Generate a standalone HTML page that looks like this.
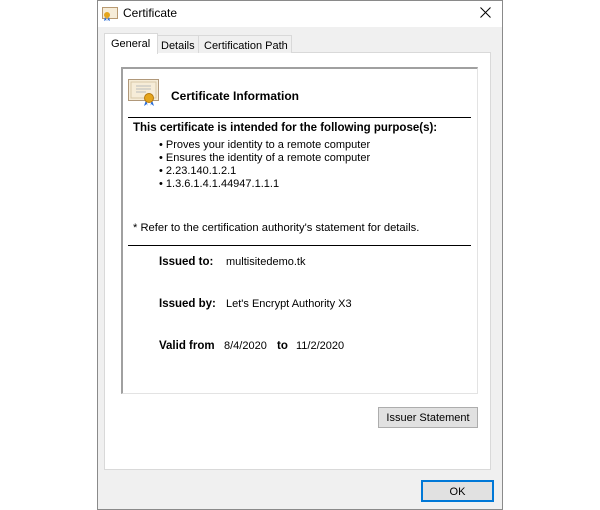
<!DOCTYPE html>
<html><head><style>
*{margin:0;padding:0;box-sizing:border-box}
body{width:600px;height:510px;background:#fff;font-family:"Liberation Sans",sans-serif;font-size:11px;color:#000;position:relative;overflow:hidden}
.a{position:absolute;white-space:nowrap}
.b{font-weight:bold;font-size:11.5px}
</style></head><body>
<div class="a" style="left:97px;top:0;width:406px;height:510px;border:1px solid #8a8a8a;background:#f0f0f0"></div>
<div class="a" style="left:98px;top:1px;width:404px;height:26px;background:#fff"></div>
<svg class="a" style="left:102px;top:7px" width="16" height="14"><rect x="0.5" y="0.5" width="15" height="11" fill="#f6ecd8" stroke="#b89a72"/><circle cx="5" cy="8" r="3" fill="#e5a51c"/><path d="M3 10l-1 4 2-1 1 1zM7 10l1 4-2-1-1 1z" fill="#2d6fd8"/></svg>
<div class="a" style="left:123px;top:6px;font-size:12px">Certificate</div>
<svg class="a" style="left:480px;top:7px" width="11" height="11"><path d="M0.5 0.5L10.5 10.5M10.5 0.5L0.5 10.5" stroke="#000" stroke-width="1"/></svg>
<div class="a" style="left:104px;top:52px;width:387px;height:418px;background:#fff;border:1px solid #d9d9d9"></div>
<div class="a" style="left:157px;top:35px;width:42px;height:18px;border:1px solid #d9d9d9;border-bottom:none;background:#f0f0f0;padding:4px 0 0 3px">Details</div>
<div class="a" style="left:198px;top:35px;width:94px;height:18px;border:1px solid #d9d9d9;border-bottom:none;background:#f0f0f0;padding:4px 0 0 5px">Certification Path</div>
<div class="a" style="left:104px;top:33px;width:54px;height:21px;border:1px solid #d9d9d9;border-bottom:none;background:#fff;padding:4px 0 0 6px">General</div>
<div class="a" style="left:121px;top:67px;width:357px;height:327px;border-top:2px solid #a0a0a0;border-left:2px solid #a0a0a0;border-right:1px solid #e3e3e3;border-bottom:1px solid #e3e3e3;background:#fff"></div>
<svg class="a" style="left:128px;top:79px" width="32" height="28"><rect x="0.5" y="0.5" width="30" height="21" fill="#f6ecd8" stroke="#b0987a"/><rect x="3" y="3" width="25" height="16" fill="none" stroke="#d8c7a8"/><path d="M8 7h15M8 10h15M8 13h10" stroke="#bbb"/><path d="M18 21l-2 6 3-2 1 2zM24 21l2 6-3-2-1 2z" fill="#2d6fd8"/><circle cx="21" cy="19" r="4.5" fill="#e5a51c" stroke="#b5780c"/></svg>
<div class="a b" style="left:171px;top:89px;font-size:12px">Certificate Information</div>
<div class="a" style="left:128px;top:117px;width:343px;height:1px;background:#000"></div>
<div class="a b" style="left:133px;top:122px">This certificate is intended for the following purpose(s):</div>
<div class="a" style="left:159px;top:139px;line-height:13px">• Proves your identity to a remote computer<br>• Ensures the identity of a remote computer<br>• 2.23.140.1.2.1<br>• 1.3.6.1.4.1.44947.1.1.1</div>
<div class="a" style="left:133px;top:222px;font-size:11.2px">* Refer to the certification authority's statement for details.</div>
<div class="a" style="left:128px;top:245px;width:343px;height:1px;background:#000"></div>
<div class="a b" style="left:159px;top:256px">Issued to:</div>
<div class="a" style="left:226px;top:256px">multisitedemo.tk</div>
<div class="a b" style="left:159px;top:298px">Issued by:</div>
<div class="a" style="left:226px;top:298px">Let's Encrypt Authority X3</div>
<div class="a b" style="left:159px;top:340px">Valid from</div>
<div class="a" style="left:224px;top:340px">8/4/2020</div>
<div class="a b" style="left:277px;top:340px">to</div>
<div class="a" style="left:296px;top:340px">11/2/2020</div>
<div class="a" style="left:378px;top:407px;width:100px;height:21px;background:#e1e1e1;border:1px solid #adadad;text-align:center;line-height:20px">Issuer Statement</div>
<div class="a" style="left:421px;top:480px;width:73px;height:22px;background:#e1e1e1;border:2px solid #0078d7;text-align:center;line-height:20px">OK</div>
</body></html>
